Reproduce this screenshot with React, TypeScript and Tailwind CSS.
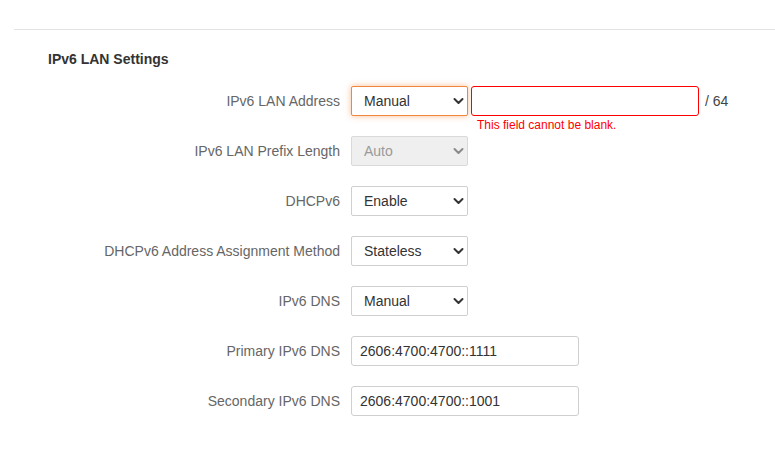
import React from "react";

function Chevron() {
  return (
    <svg
      className="pointer-events-none absolute right-[4px] top-1/2 -translate-y-1/2"
      width="11"
      height="7"
      viewBox="0 0 11 7"
      fill="none"
    >
      <path d="M1.5 1.5l4 4 4-4" stroke="currentColor" strokeWidth="2" strokeLinecap="round" strokeLinejoin="round" />
    </svg>
  );
}

type SelectProps = {
  value: string;
  options: string[];
  disabled?: boolean;
  focused?: boolean;
};

function Select({ value, options, disabled, focused }: SelectProps) {
  let cls =
    "h-[30px] w-[117px] appearance-none rounded-[2px] border pl-[12px] pr-[20px] text-[14px] outline-none ";
  if (disabled) cls += "border-[#d9d9d9] bg-[#efefef] text-[#9a9a9a]";
  else if (focused)
    cls += "border-[#f0873c] bg-white text-[#333] shadow-[0_0_6px_rgba(240,135,60,0.55)]";
  else cls += "border-[#cfcfcf] bg-white text-[#333]";

  return (
    <div className={"relative " + (disabled ? "text-[#8a8a8a]" : "text-[#333]")}>
      <select className={cls} defaultValue={value} disabled={disabled}>
        {options.map((o) => (
          <option key={o}>{o}</option>
        ))}
      </select>
      <Chevron />
    </div>
  );
}

function Row({ label, children }: { label: string; children: React.ReactNode }) {
  return (
    <div className="flex h-[30px] items-center">
      <label className="w-[326px] text-right text-[14px] text-[#666]">{label}</label>
      <div className="ml-[11px] flex items-center">{children}</div>
    </div>
  );
}

export default function App() {
  return (
    <div className="min-h-screen bg-white font-['Liberation_Sans',Arial,sans-serif] text-[14px]">
      <div className="pt-[29px] pl-[14px]">
        <div className="border-t border-[#e3e3e3] pl-[34px] pt-[21px]">
          <h2 className="text-[14px] font-bold leading-[16px] text-[#333]">IPv6 LAN Settings</h2>
        </div>

        <div className="mt-[19px] flex flex-col gap-[20px]">
          <Row label="IPv6 LAN Address">
            <Select value="Manual" options={["Auto", "Manual"]} focused />
            <div className="relative ml-[3px]">
              <input
                className="h-[30px] w-[228px] rounded-[3px] border border-[#f00] bg-white px-[8px] text-[14px] text-[#333] outline-none"
                defaultValue=""
              />
              <span className="absolute left-[6px] top-[32px] whitespace-nowrap text-[12px] leading-[14px] text-[#f00]">
                This field cannot be blank.
              </span>
            </div>
            <span className="ml-[6px] text-[14px] text-[#444]">/ 64</span>
          </Row>

          <Row label="IPv6 LAN Prefix Length">
            <Select value="Auto" options={["Auto", "Manual"]} disabled />
          </Row>

          <Row label="DHCPv6">
            <Select value="Enable" options={["Enable", "Disable"]} />
          </Row>

          <Row label="DHCPv6 Address Assignment Method">
            <Select value="Stateless" options={["Stateless", "Stateful"]} />
          </Row>

          <Row label="IPv6 DNS">
            <Select value="Manual" options={["Auto", "Manual"]} />
          </Row>

          <Row label="Primary IPv6 DNS">
            <input
              className="h-[30px] w-[228px] rounded-[3px] border border-[#cfcfcf] bg-white px-[8px] text-[14px] text-[#333] outline-none"
              defaultValue="2606:4700:4700::1111"
            />
          </Row>

          <Row label="Secondary IPv6 DNS">
            <input
              className="h-[30px] w-[228px] rounded-[3px] border border-[#cfcfcf] bg-white px-[8px] text-[14px] text-[#333] outline-none"
              defaultValue="2606:4700:4700::1001"
            />
          </Row>
        </div>
      </div>
    </div>
  );
}
